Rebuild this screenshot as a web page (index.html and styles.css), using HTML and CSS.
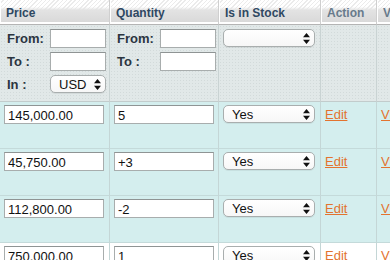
FILE: index.html
```html
<!DOCTYPE html>
<html lang="en">
  <head>
    <meta charset="UTF-8" />
    <title>Products</title>
    <link rel="stylesheet" href="styles.css">
  </head>
  <body>
    <table class="grid">
      <colgroup>
        <col class="c-price" />
        <col class="c-qty" />
        <col class="c-stock" />
        <col class="c-action" />
        <col class="c-view" />
      </colgroup>
      <thead>
        <tr class="head">
          <th>Price</th>
          <th>Quantity</th>
          <th>Is in Stock</th>
          <th class="muted">Action</th>
          <th class="muted">View</th>
        </tr>
        <tr class="filters">
          <td>
            <div class="range">
              <label>From:</label><input type="text" class="field" />
              <label>To :</label><input type="text" class="field" />
              <label>In :</label>
              <span class="picker small">
                <select><option>USD</option></select>
                <svg class="arrows" width="7" height="11" viewBox="0 0 7 11"><path d="M3.5 0L7 4.2H0z M3.5 11L0 6.8h7z" fill="#111"/></svg>
              </span>
            </div>
          </td>
          <td>
            <div class="range">
              <label>From:</label><input type="text" class="field" />
              <label>To :</label><input type="text" class="field" />
            </div>
          </td>
          <td>
            <span class="picker">
              <select><option></option></select>
              <svg class="arrows" width="7" height="11" viewBox="0 0 7 11"><path d="M3.5 0L7 4.2H0z M3.5 11L0 6.8h7z" fill="#111"/></svg>
            </span>
          </td>
          <td></td>
          <td></td>
        </tr>
      </thead>
      <tbody>
        <tr class="row">
          <td><input type="text" class="field wide" value="145,000.00" /></td>
          <td><input type="text" class="field wide" value="5" /></td>
          <td>
            <span class="picker">
              <select><option>Yes</option><option>No</option></select>
              <svg class="arrows" width="7" height="11" viewBox="0 0 7 11"><path d="M3.5 0L7 4.2H0z M3.5 11L0 6.8h7z" fill="#111"/></svg>
            </span>
          </td>
          <td><a href="#" class="link">Edit</a></td>
          <td><a href="#" class="link">View</a></td>
        </tr>
        <tr class="row">
          <td><input type="text" class="field wide" value="45,750.00" /></td>
          <td><input type="text" class="field wide" value="+3" /></td>
          <td>
            <span class="picker">
              <select><option>Yes</option><option>No</option></select>
              <svg class="arrows" width="7" height="11" viewBox="0 0 7 11"><path d="M3.5 0L7 4.2H0z M3.5 11L0 6.8h7z" fill="#111"/></svg>
            </span>
          </td>
          <td><a href="#" class="link">Edit</a></td>
          <td><a href="#" class="link">View</a></td>
        </tr>
        <tr class="row">
          <td><input type="text" class="field wide" value="112,800.00" /></td>
          <td><input type="text" class="field wide" value="-2" /></td>
          <td>
            <span class="picker">
              <select><option>Yes</option><option>No</option></select>
              <svg class="arrows" width="7" height="11" viewBox="0 0 7 11"><path d="M3.5 0L7 4.2H0z M3.5 11L0 6.8h7z" fill="#111"/></svg>
            </span>
          </td>
          <td><a href="#" class="link">Edit</a></td>
          <td><a href="#" class="link">View</a></td>
        </tr>
        <tr class="row plain">
          <td><input type="text" class="field wide" value="750,000.00" /></td>
          <td><input type="text" class="field wide" value="1" /></td>
          <td>
            <span class="picker">
              <select><option>Yes</option><option>No</option></select>
              <svg class="arrows" width="7" height="11" viewBox="0 0 7 11"><path d="M3.5 0L7 4.2H0z M3.5 11L0 6.8h7z" fill="#111"/></svg>
            </span>
          </td>
          <td><a href="#" class="link">Edit</a></td>
          <td><a href="#" class="link">View</a></td>
        </tr>
      </tbody>
    </table>
  </body>
</html>
```

FILE: styles.css
```css
* {
  margin: 0;
  padding: 0;
  box-sizing: border-box;
}

body {
  font-family: "Liberation Sans", Arial, sans-serif;
  font-size: 13px;
  color: #222;
  background: #fff;
  overflow: hidden;
}

.grid {
  table-layout: fixed;
  width: 480px;
  border-collapse: separate;
  border-spacing: 0;
}

.c-price { width: 110px; }
.c-qty { width: 109px; }
.c-stock { width: 102px; }
.c-action { width: 56px; }
.c-view { width: 103px; }

.grid th,
.grid td {
  border-right: 1px solid #c9d3d3;
  text-align: left;
  vertical-align: top;
}

/* header */
.head th {
  height: 25px;
  padding: 6px 0 0 6px;
  font-size: 12px;
  font-weight: bold;
  color: #2f4862;
  border-right: 1px solid #cfcfcf;
  border-bottom: 1px solid #b4b4b4;
  box-shadow: inset 1px 0 0 #fff;
  background:
    linear-gradient(to bottom, rgba(226, 226, 226, 0) 0, rgba(226, 226, 226, 0) 7px, #e3e3e3 10px, #d9d9d9 22px, #fff 22px, #fff 24px),
    repeating-linear-gradient(135deg, #fff 0, #fff 2px, #ebebeb 2px, #ebebeb 3px);
}

.head th.muted {
  color: #687b8c;
}

/* filter row */
.filters td {
  height: 77px;
  padding: 4px 0 0 4px;
  border-bottom: 1px solid #c2cccc;
  background-color: #e1e8e8;
  background-image: radial-gradient(circle, #d2dada 0.6px, transparent 0.9px);
  background-size: 3px 3px;
}

.range {
  display: grid;
  grid-template-columns: 43px 56px;
  row-gap: 4px;
  align-items: center;
  padding-left: 3px;
}

.range label {
  font-weight: bold;
  font-size: 13px;
  color: #2b3540;
}

.field {
  display: block;
  width: 56px;
  height: 19px;
  padding: 1px 3px 0;
  font-family: "Liberation Sans", Arial, sans-serif;
  font-size: 13px;
  color: #111;
  background: #fff;
  border: 1px solid #a8adad;
  border-top-color: #8f9494;
  outline: none;
}

.field.wide {
  width: 100px;
}

.picker {
  position: relative;
  display: block;
  width: 92px;
  height: 18px;
}

.picker.small {
  width: 56px;
}

.picker select {
  appearance: none;
  -webkit-appearance: none;
  display: block;
  width: 100%;
  height: 100%;
  padding: 0 0 0 8px;
  font-family: "Liberation Sans", Arial, sans-serif;
  font-size: 13px;
  color: #111;
  background: linear-gradient(#fff, #f7f7f7);
  border: 1px solid #a9aeae;
  border-radius: 5px;
  box-shadow: 0 1px 0 rgba(0, 0, 0, 0.06);
  outline: none;
}

.picker.small select {
  padding-left: 8px;
}

.arrows {
  position: absolute;
  right: 5px;
  top: 4px;
  pointer-events: none;
}

/* data rows */
.row td {
  height: 47px;
  padding: 3px 0 0 4px;
  background: #d4eeee;
  border-bottom: 1px solid #c4dada;
  border-right-color: #c4d6d6;
}

.row.plain td {
  background: #fff;
}

.link {
  display: inline-block;
  margin-top: 2px;
  color: #e3732f;
  font-size: 13px;
  text-decoration: underline;
}
```
